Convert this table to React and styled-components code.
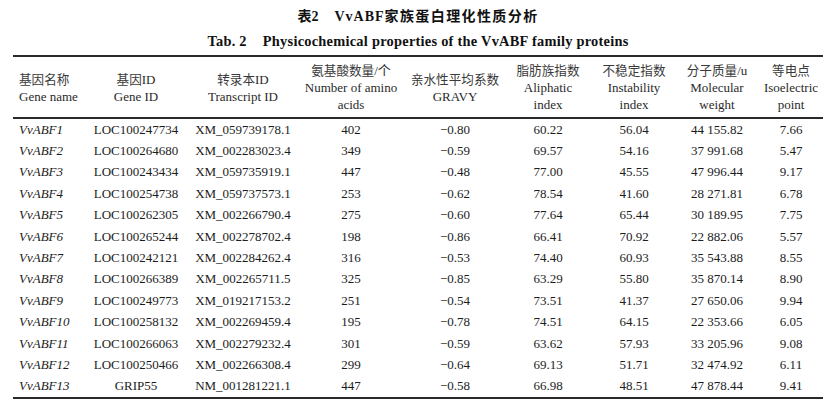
import React from "react";
import styled, { createGlobalStyle } from "styled-components";

const GlobalStyle = createGlobalStyle`
  html, body {
    margin: 0;
    padding: 0;
    background: #ffffff;
  }
  body {
    font-family: "Liberation Serif", "Noto Sans CJK SC", serif;
    color: #1c1c1c;
  }
`;

const COLS = "68px 110px 104px 112px 96px 90px 82px 84px 64px";

const Page = styled.div`
  width: 837px;
  height: 405px;
  padding: 5px 14px 0 13px;
  box-sizing: border-box;
`;

const TitleCn = styled.div`
  height: 24px;
  line-height: 24px;
  text-align: center;
  font-family: "Liberation Serif", "Noto Sans CJK SC", serif;
  font-weight: 700;
  font-size: 14px;
  color: #111;
`;

const TitleEn = styled(TitleCn)`
  font-size: 14.4px;
  letter-spacing: 0.25px;
`;

const Gap = styled.span`
  display: inline-block;
  width: ${(p) => p.w}px;
`;

const Spaced = styled.span`
  letter-spacing: ${(p) => p.ls}px;
`;

const Table = styled.div`
  margin-top: 2px;
  border-top: 2px solid #2a2a2a;
  border-bottom: 2px solid #2a2a2a;
`;

const HeadRow = styled.div`
  display: grid;
  grid-template-columns: ${COLS};
  height: 60px;
  border-bottom: 2px solid #2a2a2a;
`;

const HeadCell = styled.div`
  display: flex;
  flex-direction: column;
  justify-content: center;
  align-items: ${(p) => (p.left ? "flex-start" : "center")};
  padding-left: ${(p) => (p.left ? "6px" : "0")};
  font-size: 13px;
  line-height: 17px;
  color: #2a2a2a;
  white-space: nowrap;
`;

const Cn = styled.span`
  font-family: "Noto Sans CJK SC", sans-serif;
  font-weight: 400;
  font-size: 12.6px;
  color: #3a3a3a;
`;

const Row = styled.div`
  display: grid;
  grid-template-columns: ${COLS};
  height: 21.4px;
  align-items: center;
`;

const Cell = styled.div`
  font-size: 13px;
  line-height: 16px;
  text-align: ${(p) => (p.left ? "left" : "center")};
  padding-left: ${(p) => (p.left ? "6px" : "0")};
  font-style: ${(p) => (p.italic ? "italic" : "normal")};
  white-space: nowrap;
  color: #1c1c1c;
`;

const headers = [
  ["基因名称", "Gene name"],
  ["基因ID", "Gene ID"],
  ["转录本ID", "Transcript ID"],
  ["氨基酸数量/个", "Number of amino", "acids"],
  ["亲水性平均系数", "GRAVY"],
  ["脂肪族指数", "Aliphatic", "index"],
  ["不稳定指数", "Instability", "index"],
  ["分子质量/u", "Molecular", "weight"],
  ["等电点", "Isoelectric", "point"],
];

const rows = [
  ["VvABF1", "LOC100247734", "XM_059739178.1", "402", "−0.80", "60.22", "56.04", "44 155.82", "7.66"],
  ["VvABF2", "LOC100264680", "XM_002283023.4", "349", "−0.59", "69.57", "54.16", "37 991.68", "5.47"],
  ["VvABF3", "LOC100243434", "XM_059735919.1", "447", "−0.48", "77.00", "45.55", "47 996.44", "9.17"],
  ["VvABF4", "LOC100254738", "XM_059737573.1", "253", "−0.62", "78.54", "41.60", "28 271.81", "6.78"],
  ["VvABF5", "LOC100262305", "XM_002266790.4", "275", "−0.60", "77.64", "65.44", "30 189.95", "7.75"],
  ["VvABF6", "LOC100265244", "XM_002278702.4", "198", "−0.86", "66.41", "70.92", "22 882.06", "5.57"],
  ["VvABF7", "LOC100242121", "XM_002284262.4", "316", "−0.53", "74.40", "60.93", "35 543.88", "8.55"],
  ["VvABF8", "LOC100266389", "XM_002265711.5", "325", "−0.85", "63.29", "55.80", "35 870.14", "8.90"],
  ["VvABF9", "LOC100249773", "XM_019217153.2", "251", "−0.54", "73.51", "41.37", "27 650.06", "9.94"],
  ["VvABF10", "LOC100258132", "XM_002269459.4", "195", "−0.78", "74.51", "64.15", "22 353.66", "6.05"],
  ["VvABF11", "LOC100266063", "XM_002279232.4", "301", "−0.59", "63.62", "57.93", "33 205.96", "9.08"],
  ["VvABF12", "LOC100250466", "XM_002266308.4", "299", "−0.64", "69.13", "51.71", "32 474.92", "6.11"],
  ["VvABF13", "GRIP55", "NM_001281221.1", "447", "−0.58", "66.98", "48.51", "47 878.44", "9.41"],
];

// split "基因ID" style labels so the latin part uses the serif face
const CnLabel = ({ text }) => {
  const m = text.match(/^([^A-Za-z/]+)(.*)$/);
  if (!m) return <Cn>{text}</Cn>;
  return (
    <span>
      <Cn>{m[1]}</Cn>
      {m[2]}
    </span>
  );
};

export default function App() {
  return (
    <>
      <GlobalStyle />
      <Page>
        <TitleCn>
          表2<Gap w={16} />
          <Spaced ls={1}>VvABF</Spaced>
          <Spaced ls={1.4}>家族蛋白理化性质分析</Spaced>
        </TitleCn>
        <TitleEn>
          Tab. 2<Gap w={16} />
          Physicochemical properties of the VvABF family proteins
        </TitleEn>
        <Table>
          <HeadRow>
            {headers.map((h, i) => (
              <HeadCell key={i} left={i === 0}>
                <CnLabel text={h[0]} />
                {h.slice(1).map((line, j) => (
                  <span key={j}>{line}</span>
                ))}
              </HeadCell>
            ))}
          </HeadRow>
          {rows.map((r) => (
            <Row key={r[0]}>
              {r.map((v, i) => (
                <Cell key={i} left={i === 0} italic={i === 0}>
                  {v}
                </Cell>
              ))}
            </Row>
          ))}
        </Table>
      </Page>
    </>
  );
}
